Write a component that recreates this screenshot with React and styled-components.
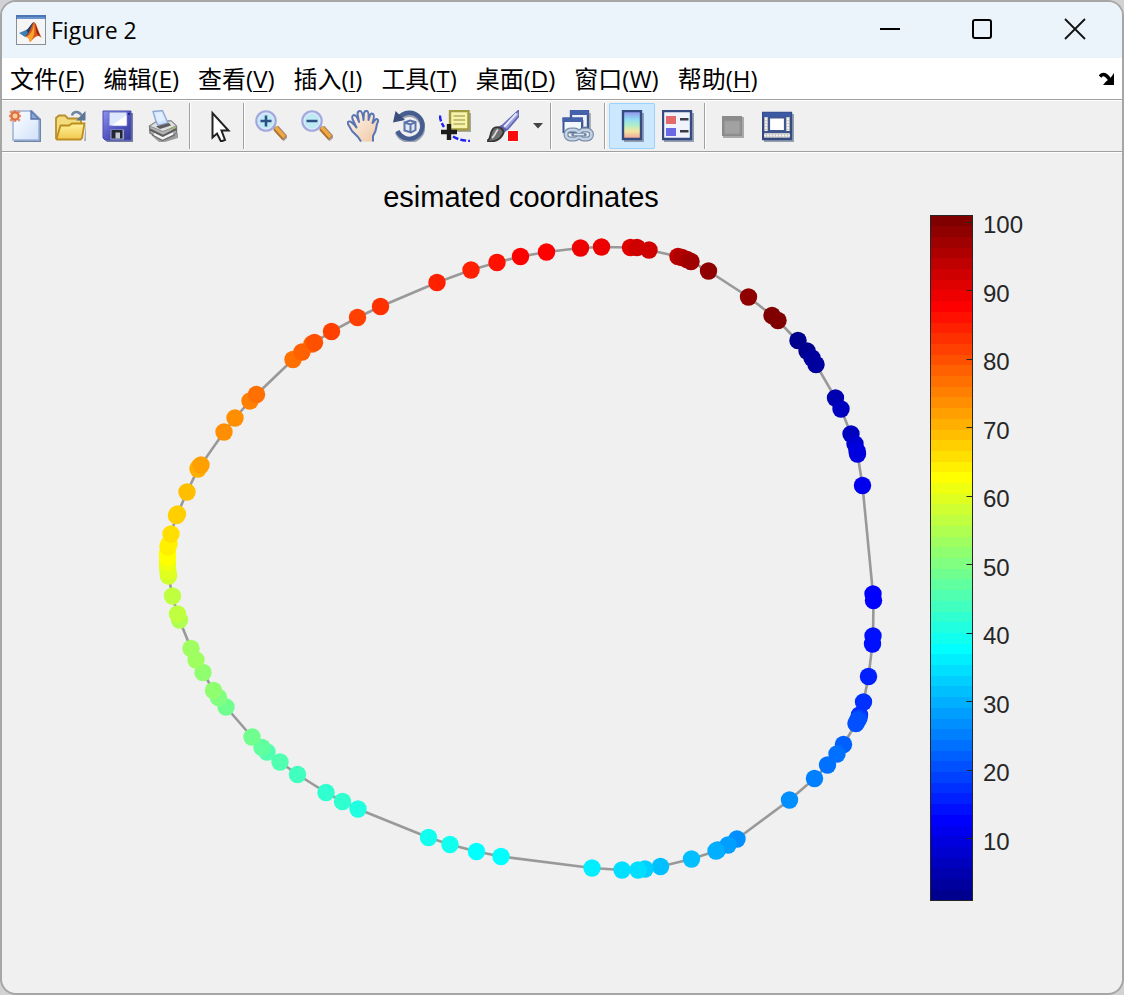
import React from "react";
//styling
import styled, { createGlobalStyle } from "styled-components";

const menus = [
  ["文件", "F"],
  ["编辑", "E"],
  ["查看", "V"],
  ["插入", "I"],
  ["工具", "T"],
  ["桌面", "D"],
  ["窗口", "W"],
  ["帮助", "H"],
];

//one [x, y] per sample, sample 1 first
const points = [
  [807, 351], [798, 340.5], [812, 358], [816, 364.5], [835.5, 398],
  [841, 409], [851, 434], [855, 444], [857, 451], [857.5, 454],
  [862.5, 485.5], [873, 594], [873.5, 600.5], [873, 636], [872.5, 644],
  [868.5, 676.5], [863.5, 702], [859.5, 715], [859, 718], [858, 720],
  [856, 723.5], [843.5, 744.5], [837, 754], [827.5, 765], [814.5, 778.5],
  [789.5, 800], [737, 839], [728, 845], [717.5, 850], [716, 851],
  [691.5, 859], [660.5, 866.5], [645, 869], [638, 870], [622, 870],
  [592, 868], [501, 856.5], [476.5, 851.5], [450, 844.5], [428.5, 837.5],
  [358, 809], [342.5, 801.5], [326, 792.5], [297.5, 774.5], [280, 762],
  [267, 752], [262, 747.5], [252, 737], [226, 707], [218.5, 697.5],
  [213.5, 690.5], [203, 672.5], [196, 660], [191, 648.5], [179.5, 620],
  [177.5, 614], [172.5, 596], [168.5, 576], [168, 572], [167.5, 567],
  [167.5, 563], [167.5, 557], [167.5, 554], [168, 547], [169, 544],
  [171, 534], [176.5, 515.5], [177.5, 514], [187, 492], [198, 469],
  [199, 467], [201, 465], [224, 432], [235, 418], [250, 401],
  [256.5, 394.5], [293, 359.5], [302, 352], [312, 344], [314.5, 342.5],
  [331.5, 331.5], [357.5, 317.5], [380.5, 306.5], [437, 282.5], [471, 270],
  [497, 262.5], [520.5, 256.5], [546.5, 252], [580.5, 248], [601.5, 247],
  [630.5, 247.5], [637, 247.5], [649, 250], [678, 256.5], [682, 257.5],
  [687, 259.5], [691, 261.5], [708.5, 271], [748.5, 297], [772, 315.5],
  [778, 320.5],
];

const LEVELS = 64;
const ramp = (i) => Math.round(255 * Math.max(0, Math.min(1, i / 16, (48 - i) / 16)));
const jet = (level) => `rgb(${ramp(level - 24)}, ${ramp(level - 8)}, ${ramp(level + 8)})`;
const sampleColor = (k) =>
  jet(Math.min(LEVELS, Math.floor(((k - 1) / (points.length - 1)) * LEVELS) + 1));

const bar = { x: 930.5, y: 215.5, width: 42, height: 685 };
const barY = (value) => bar.y + bar.height * (1 - (value - 1) / 100);
const ticks = [10, 20, 30, 40, 50, 60, 70, 80, 90, 100];

const Icon = ({ children }) => (
  <svg width="32" height="32" viewBox="0 0 32 32" aria-hidden="true">
    {children}
  </svg>
);

const NewIcon = () => (
  <Icon>
    <defs>
      <linearGradient id="paper" x1="0" y1="0" x2="1" y2="1">
        <stop offset="0" stopColor="#fff" />
        <stop offset="1" stopColor="#cfe1fa" />
      </linearGradient>
    </defs>
    <path d="M6 3H25L32 9V32H5Z" fill="#62799f" opacity=".9" />
    <path d="M4 1H23L30 8V30H4Z" fill="url(#paper)" stroke="#9db2d8" strokeWidth="1.5" />
    <path d="M22 1V9H30Z" fill="#8ba6d4" stroke="#5873a8" strokeWidth="1.3" />
    <path
      d="M6 0V12M0 6H12M1.2 1.2L10.8 10.8M10.8 1.2L1.2 10.8"
      stroke="#e58f6c"
      strokeWidth="2.6"
    />
    <circle cx="6" cy="6" r="3.6" fill="#fbcf9c" stroke="#db6f42" strokeWidth="2.2" />
  </Icon>
);

const OpenIcon = () => (
  <Icon>
    <defs>
      <linearGradient id="folder" x1="0" y1="0" x2="0" y2="1">
        <stop offset="0" stopColor="#fff29a" />
        <stop offset="1" stopColor="#f2c84e" />
      </linearGradient>
    </defs>
    <path d="M3 31H29L31 13V31Z" fill="#8d8f9c" opacity=".7" />
    <path d="M1 28V8L4 5.5H10L13 8.5H24L26 11V17L22 28Z" fill="#f3dc7c" stroke="#b8902d" strokeWidth="1.8" />
    <path d="M1.5 29L5.5 15.500H14L17 13.5H29.5L27 28L25.5 29.5H2Z" fill="url(#folder)" stroke="#bd8d20" strokeWidth="1.8" />
    <path d="M17 5.5C18 1.5 23 .5 26.5 5" fill="none" stroke="#6f84a0" strokeWidth="2.4" />
    <path d="M30.5 1V10.500H21Z" fill="#5e7695" />
  </Icon>
);

const SaveIcon = () => (
  <Icon>
    <defs>
      <linearGradient id="disk" x1="0" y1="0" x2="1" y2="1">
        <stop offset="0" stopColor="#8f93ee" />
        <stop offset=".5" stopColor="#5356c4" />
        <stop offset="1" stopColor="#34388f" />
      </linearGradient>
    </defs>
    <path d="M4 3H32V32H6L4 30Z" fill="#565f8f" opacity=".8" />
    <path d="M2 1H30V30H4L2 28Z" fill="url(#disk)" stroke="#4a4eb0" strokeWidth="1" />
    <path d="M8 2H26V16H8Z" fill="#dde8ff" stroke="#6a70c4" />
    <path d="M11 15.500L25.500 5V15.500Z" fill="#fff" />
    <path d="M9.500 19.500H23V29.5H9.5Z" fill="#9aa5cc" />
    <path d="M10.500 20H21.500V28.500H10.500Z" fill="#23272f" />
    <path d="M14.500 22.500H19V28.500H14.500Z" fill="#c4c9d8" />
    <path d="M27 3H29V5H27Z" fill="#25297a" />
  </Icon>
);

const PrintIcon = () => (
  <Icon>
    <path d="M5 26L16 31.500L31 23V28L18 32H12Z" fill="#888" opacity=".8" />
    <path d="M2.500 16L9 12L24 11L29.500 16V23L16 30L3 23Z" fill="#b4b4b4" stroke="#7c7c7c" strokeWidth="1.4" />
    <path d="M2.500 16L9 12L24 11L29.500 16L16 21.500Z" fill="#dedede" stroke="#8e8e8e" />
    <path d="M6 1.500L15.500 .5L21 13L11 15.500L8.500 10Z" fill="#cfe3ff" stroke="#8fa8d2" strokeWidth="1.3" />
    <path d="M8 3L14.500 2L18 10L11 12Z" fill="#e0eeff" />
    <path d="M9 16.500L22 13L24 15.500L13 19Z" fill="#5c5c5c" />
    <path d="M3 19.500L16 26L29.500 19" fill="none" stroke="#5e5e5e" strokeWidth="2" />
    <path d="M7 24L15.500 28.500L26 23.500" fill="none" stroke="#f4f4f4" strokeWidth="2.200" />
    <path d="M5 25L15.500 30.800L28 24.800" fill="none" stroke="#6e6e6e" strokeWidth="1.400" />
    <path d="M24.500 18.500L27 17.500" stroke="#8fbc4f" strokeWidth="2" />
  </Icon>
);

const CursorIcon = () => (
  <Icon>
    <path
      d="M11.500 3V27.500L16 23.500L20 31.500L24 30L20.500 20.500H27.500Z"
      fill="#fff"
      stroke="#222"
      strokeWidth="2"
    />
  </Icon>
);

const ZoomIcon = ({ plus }) => (
  <Icon>
    <path d="M21 18L31 29" stroke="#6a6a76" strokeWidth="6.500" opacity=".6" />
    <path d="M18 16L21.500 20" stroke="#777f9e" strokeWidth="3" />
    <path d="M20.500 18L29.500 28" stroke="#b0722c" strokeWidth="6" />
    <path d="M20.500 17L29.500 27" stroke="#f0a846" strokeWidth="3.600" />
    <circle cx="11" cy="11" r="9.300" fill="#bdebf3" stroke="#a0aadc" strokeWidth="3" />
    <circle cx="11" cy="11" r="8" fill="none" stroke="#dfe8ff" strokeWidth="1.300" />
    <path d={plus ? "M5.500 11H16.500M11 5.500V16.500" : "M5.500 11H16.500"} stroke="#304f86" strokeWidth="2.600" />
  </Icon>
);

const HandIcon = () => (
  <Icon>
    <defs>
      <linearGradient id="skin" x1="0" y1="0" x2="1" y2="1">
        <stop offset="0" stopColor="#fff8f0" />
        <stop offset="1" stopColor="#efc7a3" />
      </linearGradient>
    </defs>
    <path
      d="M14 31.500L11 27L5 21L1 14Q0 11 3 11.500Q5 12 9.500 17.500L5.500 9Q4.500 5.500 7 5Q9.500 5 12 12L10.500 4Q10.500 1 13 1Q15.500 1 16.500 10L17 3Q18 .5 20 1Q22 1.500 21.500 10L23 5Q24 3 26 4Q28 5 25.500 13L28 10Q30 8 31 10Q31.500 11 30 14L28.500 21L26 26V31.500"
      fill="url(#skin)"
      stroke="#5a75b6"
      strokeWidth="2"
      strokeLinejoin="round"
    />
  </Icon>
);

const RotateIcon = () => (
  <Icon>
    <path d="M6.500 9A13 13 0 1 1 4.500 22" fill="none" stroke="#9aa2b2" strokeWidth="5.500" />
    <path d="M6 8A13 13 0 1 1 4.500 21" fill="none" stroke="#465d90" strokeWidth="4.400" />
    <path d="M2.500 1L0 12.500L12 10Z" fill="#3a4f7c" />
    <path
      d="M11.500 12.500L17 10.500L22.500 12V20L18 22.500L11.500 20.500ZM11.500 12.500L17.500 14.500L22.500 12M17.500 14.500V22.500"
      fill="#e0e8f6"
      stroke="#5d74a9"
      strokeWidth="2"
    />
  </Icon>
);

const DataTipIcon = () => (
  <Icon>
    <path d="M1 5.500C1 10 2.500 13 5 17" fill="none" stroke="#1f20ee" strokeWidth="2.400" strokeDasharray="6 2" />
    <path d="M14 26.500C18 29 23 30.500 31 31" fill="none" stroke="#1f20ee" strokeWidth="2.400" strokeDasharray="6 2" />
    <path d="M12 3H32V22H12Z" fill="#777" opacity=".6" />
    <path d="M11 1H29.500V19.500H11Z" fill="#f6f3ad" stroke="#a09b3e" strokeWidth="2.400" />
    <path d="M14.500 6H26M14.500 10H26M14.500 14H26" stroke="#b4ae5d" strokeWidth="1.600" />
    <path d="M10 14V30M2 22H18" stroke="#1c1c1c" strokeWidth="4.400" />
  </Icon>
);

const BrushIcon = () => (
  <Icon>
    <path d="M32 0V6L20 20L15 16Z" fill="#9a9eda" stroke="#6166b4" strokeWidth="1.600" />
    <path d="M29.500 3.500L17 17" stroke="#e6e8ff" strokeWidth="2" />
    <path d="M14.500 15L20 20L17 23L11 17Z" fill="#5d61a8" />
    <path d="M1 30C5 28 2 20 8 17.500C13 16 18 20 16 24C13 30 7 32 1 31.500Z" fill="#6e6e6e" stroke="#353535" strokeWidth="1.800" />
    <path d="M5 28C9 25 8 22 11 19.500" fill="none" stroke="#d8d8d8" strokeWidth="1.800" />
    <path d="M20 20.500H32V32H20Z" fill="#fff" />
    <path d="M21 21H31V31H21Z" fill="#f90c0c" />
  </Icon>
);

const LinkIcon = () => (
  <Icon>
    <path d="M11 3H29V19H11Z" fill="#888" opacity=".6" />
    <path d="M9 1.500H26V18H9Z" fill="#edf2fb" stroke="#3d5694" strokeWidth="2.400" />
    <path d="M8 0H27V5H8Z" fill="#4461aa" />
    <path d="M3 10H22V24H3Z" fill="#888" opacity=".5" />
    <path d="M1.500 8.500H20V22H1.500Z" fill="#f2f6fd" stroke="#3d5694" strokeWidth="2" />
    <path d="M.5 7.500H21V12H.5Z" fill="#4461aa" />
    <g fill="none">
      <rect x="4" y="20" width="13" height="9" rx="4.500" stroke="#7c8ea9" strokeWidth="5" />
      <rect x="17" y="20" width="12.500" height="9" rx="4.500" stroke="#7c8ea9" strokeWidth="5" />
      <rect x="4" y="20" width="13" height="9" rx="4.500" stroke="#c3d3e6" strokeWidth="2.600" />
      <rect x="17" y="20" width="12.500" height="9" rx="4.500" stroke="#c3d3e6" strokeWidth="2.600" />
    </g>
    <path d="M11 24.700H23" stroke="#748aa9" strokeWidth="3.600" strokeLinecap="round" />
    <path d="M12 24.500H22" stroke="#dfe9f4" strokeWidth="1.600" />
  </Icon>
);

const ColorbarIcon = () => (
  <Icon>
    <defs>
      <linearGradient id="spectrum" x1="0" y1="0" x2="0" y2="1">
        <stop offset="0" stopColor="#9290ec" />
        <stop offset=".3" stopColor="#92dcf4" />
        <stop offset=".5" stopColor="#aeeecb" />
        <stop offset=".72" stopColor="#f4e6a0" />
        <stop offset="1" stopColor="#f0a096" />
      </linearGradient>
    </defs>
    <path d="M8 3H28V32H8Z" fill="#7f8c9e" opacity=".8" />
    <path d="M7 1H25V29H7Z" fill="url(#spectrum)" stroke="#364a82" strokeWidth="2.400" />
  </Icon>
);

const LegendIcon = () => (
  <Icon>
    <path d="M2 3H32V32H2Z" fill="#7f8c9e" opacity=".8" />
    <path d="M1 1H29V29H1Z" fill="#f0f3fb" stroke="#364a82" strokeWidth="2.400" />
    <path d="M4 6H14V14H4Z" fill="#e5686a" />
    <path d="M4 18H14V26H4Z" fill="#6a68e2" />
    <path d="M18 9.300H26.500M18 21.300H26.500" stroke="#3a3d46" strokeWidth="2.600" />
  </Icon>
);

const HideToolsIcon = () => (
  <Icon>
    <path d="M7 7H28V28H7Z" fill="#aaa" />
    <path d="M6 6H26V26H6Z" fill="#8b8b8b" />
    <path d="M8.500 11H24V24H8.500Z" fill="#a2a2a2" stroke="#959595" />
  </Icon>
);

const DockToolsIcon = () => (
  <Icon>
    <path d="M2 4H32V32H2Z" fill="#7f8c9e" opacity=".8" />
    <path d="M1 3H29V29H1Z" fill="#c9c9c9" stroke="#364a82" strokeWidth="2.400" />
    <path d="M1 2.500H29V7H1Z" fill="#3b5aa6" />
    <path d="M4 8V21M26 8V21M2 25.500H28" stroke="#f2f2f2" strokeWidth="2" strokeDasharray="2 1" />
    <path d="M7 7.500H23V21H7Z" fill="#fff" stroke="#3f568f" strokeWidth="2.200" />
    <path d="M2 22H28" stroke="#3f568f" strokeWidth="1.800" />
  </Icon>
);

const FigureIcon = () => (
  <svg width="30" height="30" viewBox="0 0 30 30" aria-hidden="true">
    <rect x=".5" y=".5" width="29" height="29" fill="#f5f5f5" stroke="#8a8f96" />
    <rect width="30" height="4" fill="#4a76b4" />
    <path d="M1 3H29" stroke="#8db4e0" />
    <path d="M3 18L10 15L14 18L9 22Z" fill="#3f7fb8" />
    <path d="M10 15C13 14 15 8 18 7L13 20L9 22L12 18Z" fill="#2c3f60" />
    <path d="M18 7C21 8 22 17 26 23C22 19 20 21 14 27C13 23 12 22 9 22C14 19 15 11 18 7Z" fill="#dd5a1f" />
    <path d="M18 8C17 15 15 20 10 22C13 22 13 25 14 27C18 23 19 17 18 8Z" fill="#f6a52d" />
    <path d="M19 9C21 12 22 18 25 22L21 19Z" fill="#8e1d16" />
  </svg>
);

const Plot = () => (
  <Canvas viewBox="2 153 1120 840" role="img" aria-label="esimated coordinates">
    <PlotTitle x="521" y="207">
      esimated coordinates
    </PlotTitle>
    <polygon points={points.join(" ")} fill="none" stroke="#999" strokeWidth="2.6" />
    {points.map(([x, y], i) => (
      <circle key={i} cx={x} cy={y} r="8.7" fill={sampleColor(i + 1)} />
    ))}
    {Array.from({ length: LEVELS }, (_, i) => {
      const top = Math.round(bar.y + (bar.height * (LEVELS - 1 - i)) / LEVELS);
      const bottom = Math.round(bar.y + (bar.height * (LEVELS - i)) / LEVELS);
      return (
        <rect key={i} x={bar.x} y={top} width={bar.width} height={bottom - top} fill={jet(i + 1)} />
      );
    })}
    <rect {...bar} fill="none" stroke="#262626" />
    {ticks.map((tick) => (
      <g key={tick}>
        <path
          d={`M${bar.x + bar.width - 6} ${Math.floor(barY(tick)) + 0.5}h6`}
          stroke="#262626"
        />
        <TickLabel x="983" y={Math.round(barY(tick)) + 11}>
          {tick}
        </TickLabel>
      </g>
    ))}
  </Canvas>
);

const App = () => {
  return (
    <>
      <GlobalStyle />
      <Window>
        <TitleBar>
          <FigureIcon />
          <WindowTitle>Figure 2</WindowTitle>
          <WindowButton aria-label="Minimize">
            <svg width="22" height="22" viewBox="0 0 22 22">
              <path d="M1 11H21" stroke="#000" strokeWidth="2" />
            </svg>
          </WindowButton>
          <WindowButton aria-label="Maximize">
            <svg width="22" height="22" viewBox="0 0 22 22">
              <rect x="2" y="2" width="18" height="18" rx="2" fill="none" stroke="#000" strokeWidth="2" />
            </svg>
          </WindowButton>
          <WindowButton aria-label="Close">
            <svg width="22" height="22" viewBox="0 0 22 22">
              <path d="M1 1L21 21M21 1L1 21" stroke="#111" strokeWidth="1.8" />
            </svg>
          </WindowButton>
        </TitleBar>
        <MenuBar>
          {menus.map(([name, key]) => (
            <MenuButton key={key}>
              {name}(<u>{key}</u>)
            </MenuButton>
          ))}
          <DockButton aria-label="Dock figure">
            <svg width="16" height="14" viewBox="0 0 16 14">
              <path d="M1 4.5C4 1 7 2 11 8" fill="none" stroke="#000" strokeWidth="3.6" />
              <path d="M15 1V13H4L7 9.500L11.500 6Z" fill="#000" />
            </svg>
          </DockButton>
        </MenuBar>
        <ToolBar role="toolbar">
          <ToolButton aria-label="New"><NewIcon /></ToolButton>
          <ToolButton aria-label="Open"><OpenIcon /></ToolButton>
          <ToolButton aria-label="Save"><SaveIcon /></ToolButton>
          <ToolButton aria-label="Print"><PrintIcon /></ToolButton>
          <Separator />
          <ToolButton aria-label="Edit plot"><CursorIcon /></ToolButton>
          <Separator />
          <ToolButton aria-label="Zoom in"><ZoomIcon plus /></ToolButton>
          <ToolButton aria-label="Zoom out"><ZoomIcon /></ToolButton>
          <ToolButton aria-label="Pan"><HandIcon /></ToolButton>
          <ToolButton aria-label="Rotate 3D"><RotateIcon /></ToolButton>
          <ToolButton aria-label="Data cursor"><DataTipIcon /></ToolButton>
          <ToolButton aria-label="Brush" $width={50}><BrushIcon /></ToolButton>
          <ToolButton aria-label="Brush colour" $width={19}>
            <svg width="12" height="6" viewBox="0 0 12 6">
              <path d="M1 0H11L6 5.5Z" fill="#444" />
            </svg>
          </ToolButton>
          <Separator />
          <ToolButton aria-label="Link plot"><LinkIcon /></ToolButton>
          <Separator />
          <ToolButton aria-label="Insert colorbar" aria-pressed="true" $pressed>
            <ColorbarIcon />
          </ToolButton>
          <ToolButton aria-label="Insert legend"><LegendIcon /></ToolButton>
          <Separator />
          <ToolButton aria-label="Hide plot tools"><HideToolsIcon /></ToolButton>
          <ToolButton aria-label="Show plot tools"><DockToolsIcon /></ToolButton>
        </ToolBar>
        <Plot />
      </Window>
    </>
  );
};

const GlobalStyle = createGlobalStyle`
  * {
    box-sizing: border-box;
  }
  body {
    margin: 0;
    background: #d2d2d4;
  }
  button {
    border: none;
    background: none;
    padding: 0;
    font: inherit;
    color: inherit;
  }
`;

const Window = styled.div`
  display: flex;
  flex-direction: column;
  height: 100vh;
  overflow: hidden;
  border: 2px solid #a6a6a6;
  border-radius: 16px;
  background: #f0f0f0;
  color: #000;
  font-family: "Open Sans", "Noto Sans CJK SC", sans-serif;
`;

const TitleBar = styled.header`
  display: flex;
  align-items: center;
  flex: none;
  height: 56px;
  padding-left: 14px;
  background: #ebf4fa;
`;

const WindowTitle = styled.h1`
  flex: 1;
  margin: 0 0 0 5px;
  font-size: 23px;
  font-weight: 400;
`;

const WindowButton = styled.button`
  display: flex;
  align-items: center;
  justify-content: center;
  width: 92px;
  height: 100%;
  padding-bottom: 2px;

  &:last-child {
    width: 94px;
  }
`;

const MenuBar = styled.nav`
  display: flex;
  align-items: center;
  flex: none;
  gap: 19px;
  height: 41px;
  padding: 0 7px 0 8px;
  background: #fff;
`;

const MenuButton = styled.button`
  font-size: 24px;
  line-height: 40px;
  white-space: nowrap;

  u {
    text-decoration-thickness: 1px;
    text-underline-offset: 3px;
  }
`;

const DockButton = styled.button`
  display: flex;
  margin-left: auto;
`;

const ToolBar = styled.div`
  display: flex;
  flex: none;
  height: 54px;
  padding-top: 2px;
  border-top: 1px solid #a0a0a0;
  border-bottom: 1px solid #fff;
  box-shadow: inset 0 1px #fff, inset 0 -1px #a0a0a0;
`;

const ToolButton = styled.button`
  display: flex;
  align-items: center;
  justify-content: center;
  width: ${(props) => props.$width || 46}px;
  height: 46px;
  margin-top: 1px;
  padding-bottom: 1px;
  border-radius: 2px;
  background: ${(props) => (props.$pressed ? "#cce8ff" : "none")};
  box-shadow: ${(props) => (props.$pressed ? "inset 0 0 0 1px #99d1ff" : "none")};
`;

const Separator = styled.span`
  width: 2px;
  height: 46px;
  margin: 1px 3px 0;
  border-left: 1px solid #a0a0a0;
  border-right: 1px solid #fff;
`;

const Canvas = styled.svg`
  display: block;
  flex: 1;
  width: 100%;
  min-height: 0;
  font-family: "Liberation Sans", Arial, sans-serif;
`;

const PlotTitle = styled.text`
  font-size: 29px;
  text-anchor: middle;
`;

const TickLabel = styled.text`
  font-size: 24px;
  fill: #262626;
`;

export default App;
